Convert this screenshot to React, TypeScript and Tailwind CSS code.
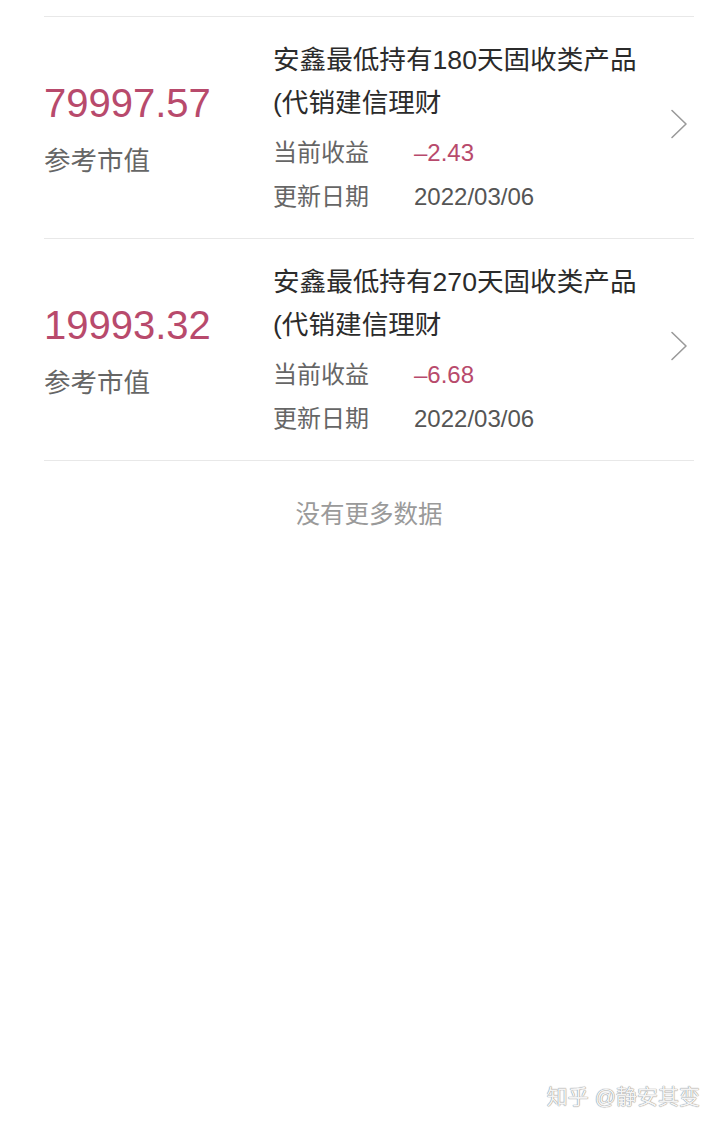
import React from "react";

const FONT = { fontFamily: '"Liberation Sans", "Noto Sans CJK SC", sans-serif' };

function Chevron() {
  return (
    <svg width="20" height="30" viewBox="0 0 20 30" fill="none">
      <path d="M3 1.5 L17 15 L3 28.5" stroke="#9a9a9a" strokeWidth="1.6" strokeLinecap="round" strokeLinejoin="round" />
    </svg>
  );
}

function Row({ value, title1, title2, gain }: { value: string; title1: string; title2: string; gain: string }) {
  return (
    <div className="flex items-stretch border-b border-[#e8e8e8] pt-[22px] pb-[19px]">
      <div className="w-[229px] shrink-0 flex flex-col justify-center">
        <div className="text-[40px] leading-[48px] text-[#b84a6c]">{value}</div>
        <div className="mt-[16px] text-[26.5px] leading-[36px] text-[#666666]">参考市值</div>
      </div>
      <div className="flex-1 min-w-0">
        <div className="text-[26.6px] leading-[43px] text-[#2b2b2b] whitespace-nowrap">{title1}</div>
        <div className="text-[26.6px] leading-[43px] text-[#2b2b2b]">{title2}</div>
        <div className="mt-[6px] flex text-[24px] leading-[44px]">
          <span className="w-[141px] text-[#666666]">当前收益</span>
          <span className="text-[#b84a6c]">{gain}</span>
        </div>
        <div className="flex text-[24px] leading-[44px]">
          <span className="w-[141px] text-[#666666]">更新日期</span>
          <span className="text-[#555555]">2022/03/06</span>
        </div>
      </div>
      <div className="flex items-center pr-[5px] pb-[10px]">
        <Chevron />
      </div>
    </div>
  );
}

export default function App() {
  return (
    <div className="relative w-[720px] h-[1127px] bg-white overflow-hidden" style={FONT}>
      <div className="pt-[16px] pl-[44px] pr-[26px]">
        <div className="border-t border-[#e8e8e8]">
          <Row value="79997.57" title1="安鑫最低持有180天固收类产品" title2="(代销建信理财" gain="–2.43" />
          <Row value="19993.32" title1="安鑫最低持有270天固收类产品" title2="(代销建信理财" gain="–6.68" />
        </div>
        <div className="mt-[36px] text-center text-[24.5px] leading-[36px] text-[#9a9a9a]">没有更多数据</div>
      </div>
      <div
        className="absolute right-[20px] bottom-[16px] text-[21px] leading-[28px] text-[#f4f4f4]"
        style={{ textShadow: "0 0 1px #8a8a8a, 0 0 1px #8a8a8a" }}
      >
        知乎 @静安其变
      </div>
    </div>
  );
}
